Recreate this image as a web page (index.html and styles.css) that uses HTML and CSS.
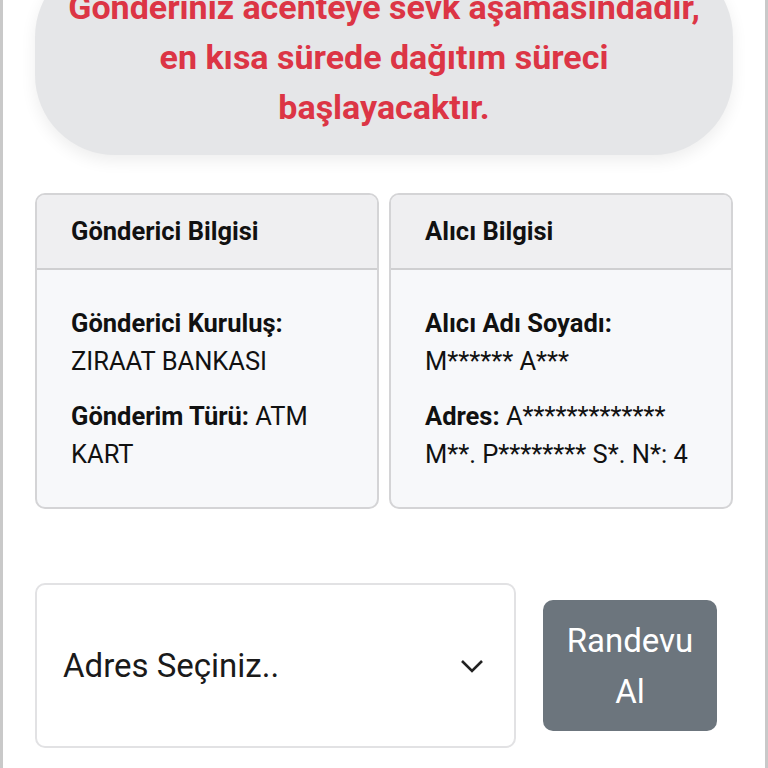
FILE: index.html
```html
<!DOCTYPE html>
<html lang="tr">
<head>
    <meta charset="UTF-8">
    <meta name="viewport" content="width=device-width, initial-scale=1.0">
    <title>Gönderi Takip</title>
    <link rel="stylesheet" href="styles.css">
</head>
<body>
    <div class="page">
        <!-- Durum mesajı -->
        <div class="status-alert">
            Gönderiniz acenteye sevk aşamasındadır, en kısa sürede dağıtım süreci başlayacaktır.
        </div>

        <!-- Bilgi kartları -->
        <div class="info-grid">
            <div class="info-card">
                <div class="info-header">Gönderici Bilgisi</div>
                <div class="info-body">
                    <p><b>Gönderici Kuruluş:</b> ZIRAAT BANKASI</p>
                    <p><b>Gönderim Türü:</b> ATM KART</p>
                </div>
            </div>
            <div class="info-card">
                <div class="info-header">Alıcı Bilgisi</div>
                <div class="info-body">
                    <p><b>Alıcı Adı Soyadı:</b> M****** A***</p>
                    <p><b>Adres:</b> A************* M**. P******** S*. N*: 4</p>
                </div>
            </div>
        </div>

        <!-- Randevu -->
        <div class="appointment">
            <div class="address-select">
                <span>Adres Seçiniz..</span>
                <svg class="chevron" width="24" height="16" viewBox="0 0 24 16">
                    <path d="M2 3 L12 13 L22 3" fill="none" stroke="#222" stroke-width="2.6"/>
                </svg>
            </div>
            <button class="btn-appointment">Randevu Al</button>
        </div>
    </div>
</body>
</html>
```

FILE: styles.css
```css
* {
    margin: 0;
    padding: 0;
    box-sizing: border-box;
}

body {
    font-family: Roboto, "Liberation Sans", sans-serif;
    background: #fff;
    color: #212529;
    overflow: hidden;
}

.page {
    display: flow-root;
    min-height: 768px;
    border-left: 3px solid #c9c9c9;
    border-right: 3px solid #c9c9c9;
    padding: 0 32px;
}

/* Status */
.status-alert {
    margin-top: -43px;
    background: #e5e6e8;
    border-radius: 80px;
    padding: 25px 24px 23px;
    text-align: center;
    color: #dc3545;
    font-size: 34px;
    font-weight: bold;
    line-height: 50px;
    box-shadow: 0 6px 16px rgba(0, 0, 0, 0.07);
}

/* Cards */
.info-grid {
    display: grid;
    grid-template-columns: 1fr 1fr;
    gap: 10px;
    margin-top: 38px;
}

.info-card {
    border: 2px solid #d4d4d6;
    border-radius: 10px;
    background: #f7f8fa;
    overflow: hidden;
}

.info-header {
    background: #efeff1;
    border-bottom: 2px solid #cfcfd1;
    padding: 17px 34px 18px;
    font-size: 25.5px;
    font-weight: bold;
    line-height: 38px;
    color: #111;
}

.info-body {
    padding: 34px 34px 34px;
    font-size: 25.5px;
    line-height: 38px;
    color: #111;
}

.info-body p + p {
    margin-top: 17px;
}

/* Appointment */
.appointment {
    display: flex;
    align-items: center;
    gap: 27px;
    margin-top: 74px;
    padding-right: 16px;
}

.address-select {
    width: 481px;
    height: 165px;
    border: 2px solid #e2e2e4;
    border-radius: 10px;
    background: #fff;
    display: flex;
    align-items: center;
    justify-content: space-between;
    padding: 0 30px 0 26px;
    font-size: 33px;
    color: #1a1a1a;
}

.btn-appointment {
    flex: 1;
    height: 131px;
    background: #6c757d;
    border: none;
    border-radius: 10px;
    color: #fff;
    font-family: inherit;
    font-size: 33px;
    line-height: 51px;
    padding: 0 20px;
}
```
